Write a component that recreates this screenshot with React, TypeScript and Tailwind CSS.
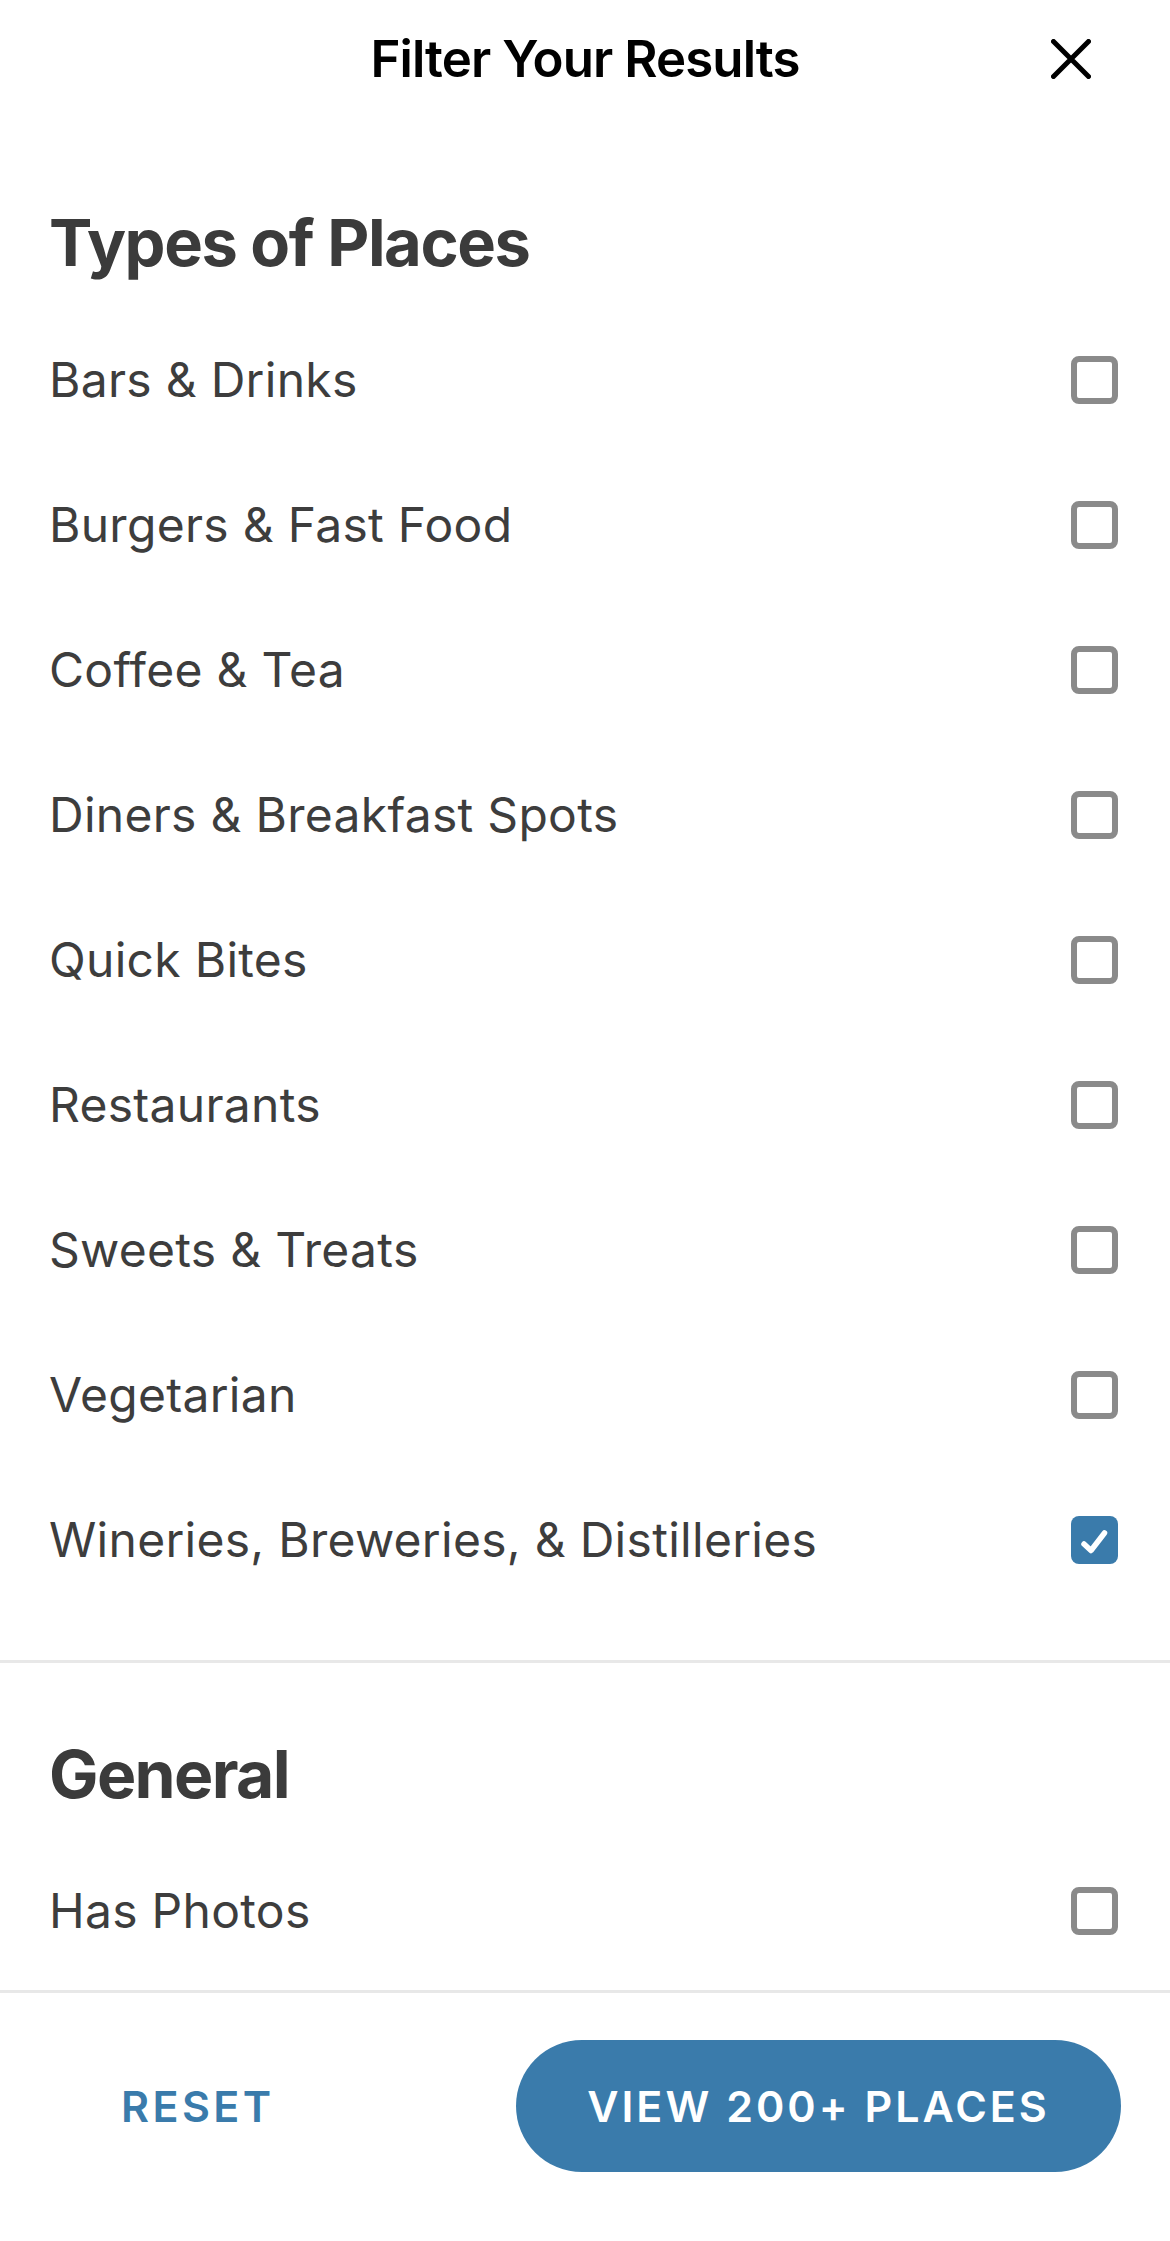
import { useState } from "react";

const PLACE_TYPES = [
  "Bars & Drinks",
  "Burgers & Fast Food",
  "Coffee & Tea",
  "Diners & Breakfast Spots",
  "Quick Bites",
  "Restaurants",
  "Sweets & Treats",
  "Vegetarian",
  "Wineries, Breweries, & Distilleries",
];

function Checkbox({ checked, onClick }: { checked: boolean; onClick: () => void }) {
  if (checked) {
    return (
      <button onClick={onClick} className="mr-[3px] flex h-[48px] w-[47px] items-center justify-center rounded-[8px] bg-[#3a7bab]">
        <svg width="47" height="48" viewBox="0 0 47 48" fill="none">
          <path d="M13 28l7 6.5L33.5 17" stroke="white" strokeWidth="5.5" strokeLinecap="round" strokeLinejoin="round" />
        </svg>
      </button>
    );
  }
  return (
    <button onClick={onClick} className="mr-[3px] h-[48px] w-[47px] rounded-[8px] border-[6px] border-[#8a8a8a] bg-white" />
  );
}

function Row({ label, checked, onToggle }: { label: string; checked: boolean; onToggle: () => void }) {
  return (
    <div className="flex h-[145px] items-center justify-between">
      <span className="text-[48px] leading-none tracking-[0.006em] text-[#3d3d3d]">{label}</span>
      <Checkbox checked={checked} onClick={onToggle} />
    </div>
  );
}

export default function App() {
  const [selected, setSelected] = useState<Record<string, boolean>>({
    "Wineries, Breweries, & Distilleries": true,
  });

  const toggle = (key: string) => setSelected(s => ({ ...s, [key]: !s[key] }));

  return (
    <div className="flex h-[2241px] w-full flex-col bg-white font-['Inter','Noto_Sans',sans-serif]">
      <div className="flex-1 overflow-hidden">
        <header className="grid h-[117px] grid-cols-[1fr_auto_1fr] items-center">
          <div />
          <h2 className="text-[51px] font-semibold leading-none tracking-[-0.018em] text-black">Filter Your Results</h2>
          <button className="mr-[79px] justify-self-end">
            <svg width="40" height="40" viewBox="0 0 40 40" fill="none">
              <path d="M2.5 2.5l35 35M37.5 2.5l-35 35" stroke="black" strokeWidth="5" strokeLinecap="round" />
            </svg>
          </button>
        </header>

        <section className="px-[49px] pb-[48px]">
          <h1 className="mt-[93px] text-[65px] font-bold leading-none tracking-[-0.022em] text-[#3b3b3b]">Types of Places</h1>
          <div className="mt-[32px]">
            {PLACE_TYPES.map(p => (
              <Row key={p} label={p} checked={!!selected[p]} onToggle={() => toggle(p)} />
            ))}
          </div>
        </section>

        <div className="h-[3px] bg-[#e8e8e8]" />

        <section className="px-[49px]">
          <h1 className="mt-[78px] text-[66px] font-bold leading-none tracking-[-0.025em] text-[#3b3b3b]">General</h1>
          <div className="mt-[31px]">
            <Row label="Has Photos" checked={!!selected["Has Photos"]} onToggle={() => toggle("Has Photos")} />
          </div>
        </section>
      </div>

      <footer className="flex items-center border-t-[3px] border-[#e8e8e8] pb-[69px] pl-[121px] pr-[49px] pt-[47px]">
        <button className="text-[43px] font-semibold uppercase leading-none tracking-[0.08em] text-[#3a7bab]">Reset</button>
        <button className="ml-auto flex h-[132px] w-[605px] items-center justify-center rounded-full bg-[#3a7bab] text-[43px] font-semibold leading-none tracking-[0.07em] text-white">
          VIEW 200+ PLACES
        </button>
      </footer>
    </div>
  );
}
